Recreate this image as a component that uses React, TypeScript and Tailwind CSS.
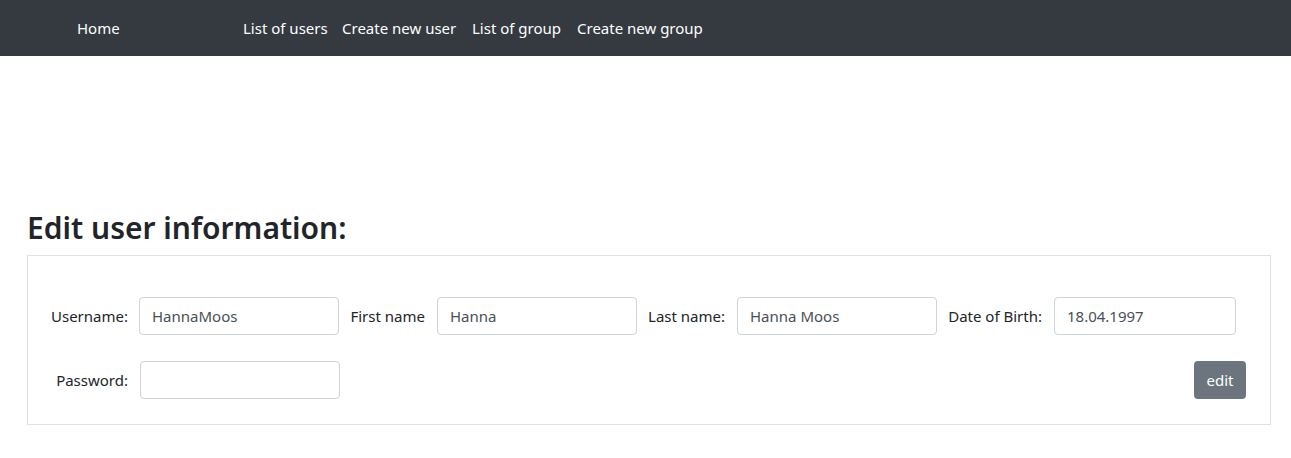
import React from "react";

function Field({ label, labelW, value, gapI, inputW = 200 }: { label: string; labelW: number; value: string; gapI: number; inputW?: number }) {
  return (
    <div className="flex items-center">
      <label className="text-right whitespace-nowrap text-[#212529]" style={{ width: labelW }}>
        {label}
      </label>
      <input
        readOnly
        value={value}
        className="h-[38px] rounded-[4px] border border-[#ced4da] bg-white px-3 text-[#495057] outline-none"
        style={{ width: inputW, marginLeft: gapI }}
      />
    </div>
  );
}

export default function App() {
  return (
    <div className="min-h-[458px] bg-white font-['Noto_Sans',sans-serif] text-[15px] text-[#212529]">
      <nav className="flex h-14 items-center bg-[#343a40] text-white">
        <div className="w-[243px] pl-[77px]">Home</div>
        <div className="w-[99px] whitespace-nowrap">List of users</div>
        <div className="w-[130px] whitespace-nowrap">Create new user</div>
        <div className="w-[105px] whitespace-nowrap">List of group</div>
        <div className="whitespace-nowrap">Create new group</div>
      </nav>
      <div className="pl-[27px] pr-[20px] pt-[153px]">
        <h2 className="mb-2 text-[30px] font-semibold leading-[38px] text-[#212529]">Edit user information:</h2>
        <div className="border border-[#dee2e6] pr-[24px] pt-[41px] pb-[25px]">
          <div className="flex items-center">
            <Field label="Username:" labelW={100} value="HannaMoos" gapI={11} />
            <Field label="First name" labelW={86} value="Hanna" gapI={12} />
            <Field label="Last name:" labelW={88} value="Hanna Moos" gapI={12} />
            <Field label="Date of Birth:" labelW={105} value="18.04.1997" gapI={12} inputW={182} />
          </div>
          <div className="mt-[26px] flex items-center justify-between">
            <Field label="Password:" labelW={100} value="" gapI={12} />
            <button className="h-[38px] w-[52px] rounded-[4px] bg-[#6c757d] text-white">edit</button>
          </div>
        </div>
      </div>
    </div>
  );
}
